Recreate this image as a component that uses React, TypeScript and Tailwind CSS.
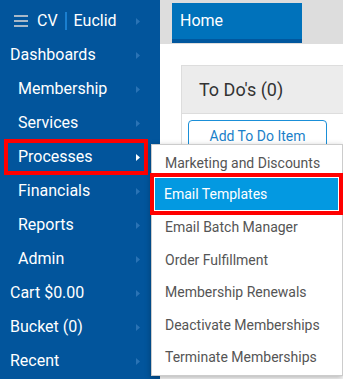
import React from "react";

const Arrow = ({ white }: { white?: boolean }) => (
  <svg width="4" height="7" viewBox="0 0 4 7" className="shrink-0">
    <path d="M0 0 L4 3.5 L0 7 Z" fill={white ? "#ffffff" : "#2a73b5"} />
  </svg>
);

const sideItems: { label: string; indent: boolean; active?: boolean }[] = [
  { label: "Dashboards", indent: false },
  { label: "Membership", indent: true },
  { label: "Services", indent: true },
  { label: "Processes", indent: true, active: true },
  { label: "Financials", indent: true },
  { label: "Reports", indent: true },
  { label: "Admin", indent: true },
  { label: "Cart $0.00", indent: false },
  { label: "Bucket (0)", indent: false },
  { label: "Recent", indent: false },
];

const menuItems = [
  "Marketing and Discounts",
  "Email Templates",
  "Email Batch Manager",
  "Order Fulfillment",
  "Membership Renewals",
  "Deactivate Memberships",
  "Terminate Memberships",
];

export default function App() {
  return (
    <div
      className="relative w-[343px] h-[379px] overflow-hidden flex bg-white"
      style={{ fontFamily: "Roboto, 'Liberation Sans', sans-serif" }}
    >
      {/* Sidebar */}
      <div className="w-[160px] h-full bg-[#02559c] flex flex-col pt-[4px] shrink-0">
        <div className="h-[34px] flex items-center pl-[14px] pr-[20px]">
          <div className="flex flex-col gap-[3px] w-[14px] mr-[9px]">
            <div className="h-[2px] bg-[#a8b8c8]" />
            <div className="h-[2px] bg-[#a8b8c8]" />
            <div className="h-[2px] bg-[#a8b8c8]" />
          </div>
          <span className="text-white text-[16px]">CV</span>
          <span className="w-[2px] h-[18px] bg-[#1a7fd0] mx-[7px]" />
          <span className="text-white text-[16px] flex-1">Euclid</span>
          <Arrow />
        </div>
        {sideItems.map((it) => (
          <div
            key={it.label}
            className={`h-[34px] flex items-center pr-[20px] ${it.indent ? "pl-[18px]" : "pl-[10px]"}`}
          >
            <span className="text-white text-[16px] flex-1">{it.label}</span>
            <Arrow white={it.active} />
          </div>
        ))}
      </div>

      {/* Main */}
      <div className="flex-1 flex flex-col">
        <div className="h-[44px] bg-[#dddddd] flex items-start pl-[12px] pt-[3px]">
          <div className="w-[130px] h-[40px] bg-[#0072bb] border-b-[4px] border-[#01579e] flex items-center pl-[8px] pb-[1px]">
            <span className="text-white text-[16px]">Home</span>
          </div>
        </div>
        <div className="pl-[21px] pt-[21px]">
          <div className="border border-[#dddddd] border-r-0">
            <div className="h-[48px] bg-[#ececec] flex items-center pl-[17px] border-b border-[#dddddd]">
              <span className="text-[18px] text-[#333333]">To Do's (0)</span>
            </div>
            <div className="pl-[6px] pt-[6px] pb-[10px]">
              <div className="w-[139px] h-[32px] border border-[#1a8fd8] rounded-[4px] flex items-center justify-center">
                <span className="text-[14px] text-[#1a7fc9]">Add To Do Item</span>
              </div>
            </div>
          </div>
        </div>
      </div>

      {/* Processes annotation */}
      <div className="absolute left-[4px] top-[139px] w-[144px] h-[36px] border-[4px] border-[#ff0000]" />

      {/* Dropdown menu */}
      <div className="absolute left-[151px] top-[144px] w-[192px] h-[232px] bg-white border border-[#cccccc] shadow-[0_2px_6px_rgba(0,0,0,0.3)] pt-[2px]">
        {menuItems.map((m, i) =>
          i === 1 ? (
            <div key={m} className="relative h-[32.4px] -mx-[1px]">
              <div className="absolute left-[-1px] right-0 top-[-6px] bottom-[-3px] border-[4px] border-[#ff0000]">
                <div className="w-full h-full border border-white bg-[#0399e1] flex items-center pl-[9px]">
                  <span className="text-white text-[14px]">{m}</span>
                </div>
              </div>
            </div>
          ) : (
            <div key={m} className="h-[32.4px] flex items-center pl-[13px]">
              <span className="text-[#555555] text-[14px]">{m}</span>
            </div>
          )
        )}
      </div>
    </div>
  );
}
